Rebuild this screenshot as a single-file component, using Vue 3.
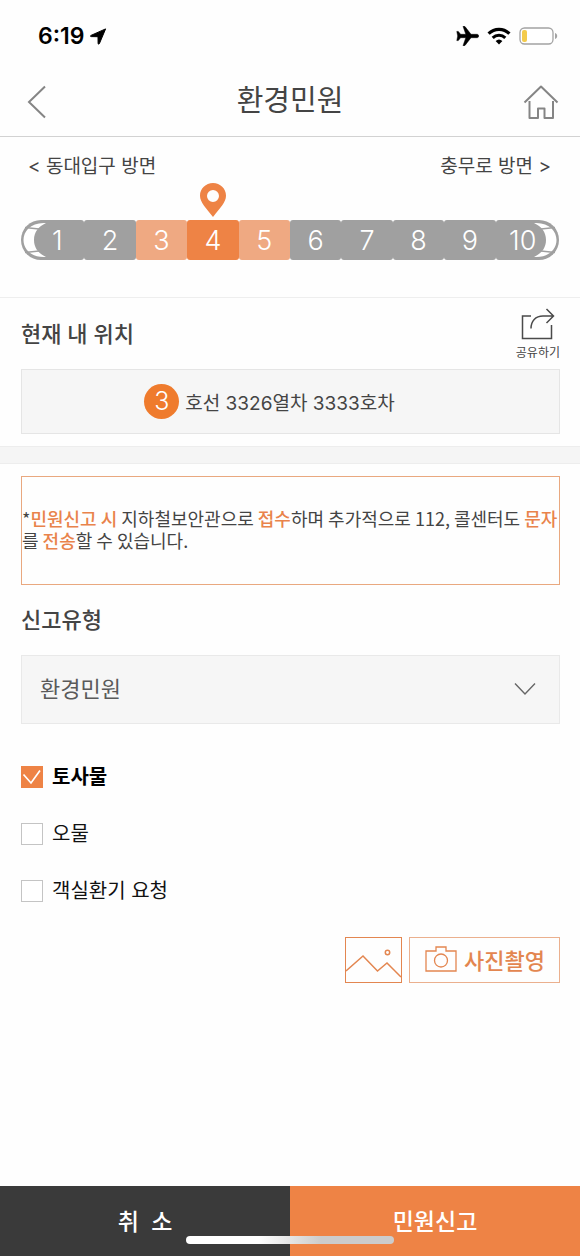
<script setup>
import { ref } from 'vue'

const cars = [1, 2, 3, 4, 5, 6, 7, 8, 9, 10]
const currentCar = ref(4)
const category = ref('환경민원')
const categories = ['환경민원', '질서저해', '응급환자']
const options = ref([
  { id: 'vomit', label: '토사물', checked: true },
  { id: 'filth', label: '오물', checked: false },
  { id: 'air', label: '객실환기 요청', checked: false },
])

const carState = (n) => ({
  current: n === currentCar.value,
  near: Math.abs(n - currentCar.value) === 1,
})
</script>

<template>
  <div class="page">
    <div class="status">
      <div class="clock">
        <span>6:19</span>
        <svg width="17" height="17" viewBox="0 0 17 17" aria-hidden="true">
          <path d="M15.600.900 1 7.400c-.8.4-.7 1.100.2 1.200l6.800.1.1 6.700c.1.900.9 1 1.300.2z" fill="#000" stroke="#000" stroke-linejoin="round" />
        </svg>
      </div>
      <div class="signals">
        <svg width="23" height="20" viewBox="0 0 23 20" aria-hidden="true">
          <path d="M21 8.300h-6L9.200.8C8.900.4 8.600.3 8.200.3H7l2.800 8H4.600L2.300 5.400H.8L1.700 10 .8 14.600h1.500l2.300-2.900h5.200l-2.800 8h1.200c.4 0 .7-.1 1-.5l5.800-7.500h6c1 0 1.700-.8 1.700-1.700S22 8.300 21 8.300z" fill="#000" stroke="#000" stroke-width=".5" />
        </svg>
        <svg width="24" height="18" viewBox="0 0 24 18" aria-hidden="true">
          <path d="M1.600 6.600a14.800 14.800 0 0 1 20.800 0" fill="none" stroke="#000" stroke-width="3.200" />
          <path d="M5.700 10.900a9 9 0 0 1 12.600 0" fill="none" stroke="#000" stroke-width="3" />
          <path d="M8.600 14.100a5 5 0 0 1 6.800 0L12 17.500z" fill="#000" />
        </svg>
        <svg width="39" height="18" viewBox="0 0 39 18" aria-hidden="true">
          <rect x="1" y="1" width="33" height="16" rx="4.500" fill="#fff" stroke="#a3a3a3" stroke-width="1.300" />
          <rect x="3" y="3" width="5" height="12" rx="2" fill="#f4cb4b" />
          <path d="M36 6c1.600.6 2.200 1.600 2.200 3s-.6 2.400-2.200 3z" fill="#a3a3a3" />
        </svg>
      </div>
    </div>

    <header class="header">
      <button class="back" type="button" aria-label="뒤로">
        <svg width="20" height="34" viewBox="0 0 20 34"><path d="M18 1.500 2 17l16 15.500" fill="none" stroke="#858585" stroke-width="2" /></svg>
      </button>
      <h1>환경민원</h1>
      <button class="home" type="button" aria-label="홈">
        <svg width="36" height="36" viewBox="0 0 36 36" fill="none" stroke="#858585" stroke-width="2" stroke-linejoin="round">
          <path d="M1.500 18.500 18 2.500l16.500 16" />
          <path d="M6.500 17v17h8.500v-9.500h6.500V34h8.500V17" />
        </svg>
      </button>
    </header>

    <section class="train-area">
      <div class="directions">
        <span>&lt; 동대입구 방면</span>
        <span>충무로 방면 &gt;</span>
      </div>
      <div class="train">
        <button
          v-for="n in cars"
          :key="n"
          type="button"
          class="car"
          :class="carState(n)"
          @click="currentCar = n"
        >
          <svg v-if="n === 1 || n === 10" class="nose" width="28" height="40" viewBox="0 0 28 40" aria-hidden="true">
            <path d="M25 3C10 2 2.500 11 2.500 20S10 38 25 37C17.500 33.500 13 28 13 20S17.500 6.500 25 3z" fill="#fff" />
            <path d="M4 7.500 18 9M4 32.500 18 31" stroke="#a0a0a0" stroke-width="1.600" />
          </svg>
          <svg v-if="n === currentCar" class="pin" width="26" height="34" viewBox="0 0 26 34" aria-hidden="true">
            <path d="M13 0C5.800 0 0 5.600 0 12.700 0 19.500 6 24.500 13 34c7-9.500 13-14.500 13-21.300C26 5.600 20.200 0 13 0zm0 7a6 6 0 1 1 0 12 6 6 0 0 1 0-12z" fill="#ee8345" />
          </svg>
          {{ n }}
        </button>
      </div>
    </section>

    <section class="location">
      <div class="location-head">
        <h2>현재 내 위치</h2>
        <button class="share" type="button">
          <svg width="36" height="34" viewBox="0 0 36 34" fill="none" stroke="#4a4a4a" stroke-width="1.500">
            <path d="M11 8H2.500v22.500h29V17" />
            <path d="M11 20.500c0-7.500 4.500-12.500 12-12.500h10.500M26.500 1l7 7-7 7" />
          </svg>
          <span>공유하기</span>
        </button>
      </div>
      <div class="location-box">
        <span class="line">3</span>
        <span>호선 3326열차 3333호차</span>
      </div>
    </section>

    <div class="band"></div>

    <main class="report">
      <p class="notice">*<b>민원신고 시</b> 지하철보안관으로 <b>접수</b>하며 추가적으로 112, 콜센터도 <b>문자</b>를 <b>전송</b>할 수 있습니다.</p>

      <label class="type-label" for="category">신고유형</label>
      <div class="select-wrap">
        <select id="category" v-model="category">
          <option v-for="c in categories" :key="c">{{ c }}</option>
        </select>
        <svg class="chevron" width="22" height="14" viewBox="0 0 22 14" aria-hidden="true">
          <path d="M1 1.500 11 12 21 1.500" fill="none" stroke="#666" stroke-width="1.400" />
        </svg>
      </div>

      <div class="options">
        <label v-for="o in options" :key="o.id" class="option" :class="{ on: o.checked }">
          <span class="tick">
            <input v-model="o.checked" type="checkbox" />
            <svg v-if="o.checked" width="22" height="22" viewBox="0 0 22 22" aria-hidden="true">
              <path d="M2.500 8.500 10 17 19 4.500" fill="none" stroke="#fff" stroke-width="1.700" />
            </svg>
          </span>
          <span>{{ o.label }}</span>
        </label>
      </div>

      <div class="photo">
        <button class="gallery" type="button" aria-label="사진 선택">
          <svg width="55" height="44" viewBox="0 0 55 44" fill="none" stroke="#e38650" stroke-width="1.500">
            <path d="M0 33 17 18l14.500 15L41 25l14 14" />
            <circle cx="41.500" cy="14.500" r="2.200" />
          </svg>
        </button>
        <button class="camera" type="button">
          <svg width="32" height="26" viewBox="0 0 32 26" fill="none" stroke="#e38650" stroke-width="1.300">
            <path d="M1 5h10V1h10v4h10v20H1z" />
            <circle cx="16" cy="14.500" r="6.500" />
          </svg>
          <span>사진촬영</span>
        </button>
      </div>
    </main>

    <footer class="actions">
      <button class="cancel" type="button">취&nbsp;&nbsp;소</button>
      <button class="submit" type="button">민원신고</button>
      <span class="home-bar"></span>
    </footer>
  </div>
</template>

<style>
body {
  background: #fefefe;
}
</style>

<style scoped>
.page {
  display: flex;
  flex-direction: column;
  min-height: 100vh;
  font-family: Inter, "Noto Sans CJK KR", sans-serif;
  color: #444;
}
.page * {
  box-sizing: border-box;
}
button,
select {
  margin: 0;
  padding: 0;
  border: 0;
  background: none;
  font-family: inherit;
  color: inherit;
  cursor: pointer;
}
svg {
  display: block;
  flex: none;
}
h1,
h2,
p {
  margin: 0;
}

.status {
  display: flex;
  justify-content: space-between;
  align-items: center;
  height: 72px;
  padding: 0 22px 0 38px;
}
.clock {
  display: flex;
  align-items: center;
  gap: 6px;
  font-size: 23px;
  font-weight: 600;
  color: #000;
}
.signals {
  display: flex;
  align-items: center;
  gap: 8px;
}

.header {
  display: grid;
  grid-template-columns: 1fr auto 1fr;
  align-items: center;
  height: 65px;
  padding: 0 21px 4px;
  border-bottom: 1px solid #d2d2d2;
}
.back {
  justify-self: start;
  padding-left: 6px;
}
.home {
  justify-self: end;
}
h1 {
  padding-bottom: 2px;
  font-size: 29px;
  line-height: 40px;
  font-weight: 400;
}

.train-area {
  padding: 17px 21px 37px;
  border-bottom: 1px solid #eee;
}
.directions {
  display: flex;
  justify-content: space-between;
  padding: 0 8px 0 7px;
  font-size: 19px;
  line-height: 26px;
}
.train {
  display: grid;
  grid-template-columns: 63fr repeat(8, 51fr) 63fr;
  margin-top: 40px;
}
.car {
  position: relative;
  height: 40px;
  padding-top: 2px;
  border-radius: 3px;
  background: #a0a0a0;
  color: #fff;
  font-size: 27px;
  font-weight: 300;
  line-height: 38px;
  text-align: center;
}
.car:first-child {
  padding-left: 9px;
  border-radius: 20px 3px 3px 20px;
}
.car:last-child {
  padding-right: 9px;
  border-radius: 3px 20px 20px 3px;
}
.car.near {
  background: #efa982;
}
.car.current {
  background: #ee8345;
}
.nose {
  position: absolute;
  top: 0;
  left: 0;
}
.car:last-child .nose {
  right: 0;
  left: auto;
  transform: scaleX(-1);
}
.pin {
  position: absolute;
  bottom: 43px;
  left: calc(50% - 13px);
}

.location {
  padding: 10px 20px 12px 21px;
}
.location-head {
  display: flex;
  justify-content: space-between;
  align-items: flex-start;
  height: 61px;
}
h2,
.type-label {
  font-size: 22px;
  line-height: 32px;
  font-weight: 500;
}
h2 {
  padding-top: 10px;
}
.share {
  display: flex;
  flex-direction: column;
  align-items: center;
  gap: 2px;
  font-size: 12px;
  line-height: 18px;
}
.location-box {
  display: flex;
  justify-content: center;
  align-items: center;
  gap: 6px;
  height: 65px;
  padding-right: 42px;
  border: 1px solid #e5e5e5;
  background: #f6f6f6;
  font-size: 19px;
}
.line {
  width: 35px;
  border-radius: 50%;
  background: #ef7b2d;
  color: #fff;
  font-size: 25px;
  font-weight: 300;
  line-height: 35px;
  text-align: center;
}

.band {
  height: 18px;
  border: solid #ededed;
  border-width: 1px 0;
  background: #f5f5f5;
}

.report {
  flex: 1;
  padding: 12px 20px 40px 21px;
}
.notice {
  height: 109px;
  padding-top: 30px;
  border: 1px solid #e9a87f;
  font-family: "Noto Sans CJK KR", sans-serif;
  font-size: 18px;
  line-height: 22px;
}
.notice b {
  font-weight: 500;
  color: #e9834b;
}
.type-label {
  display: block;
  margin: 19px 0;
}
.select-wrap {
  position: relative;
}
select {
  display: block;
  width: 100%;
  height: 69px;
  padding: 0 60px 2px 18px;
  border: 1px solid #e9e9e9;
  border-radius: 0;
  appearance: none;
  background: #f6f6f6;
  font-size: 22px;
  color: #5a5a5a;
}
.chevron {
  position: absolute;
  top: 27px;
  right: 24px;
  pointer-events: none;
}
.options {
  display: flex;
  flex-direction: column;
  gap: 29px;
  margin-top: 39px;
}
.option {
  display: flex;
  align-items: center;
  gap: 9px;
  font-size: 20px;
  line-height: 28px;
  color: #111;
}
.option.on {
  font-weight: 700;
  color: #000;
}
.tick {
  position: relative;
  width: 22px;
  height: 22px;
}
.tick input {
  display: block;
  width: 22px;
  height: 22px;
  margin: 0;
  border: 1px solid #c4c4c4;
  appearance: none;
  background: #fff;
}
.tick input:checked {
  border-color: #ee8345;
  background: #ee8345;
}
.tick svg {
  position: absolute;
  top: 0;
  left: 0;
  pointer-events: none;
}
.photo {
  display: flex;
  justify-content: flex-end;
  gap: 7px;
  margin-top: 32px;
}
.gallery,
.camera {
  height: 46px;
  border: 1px solid #e38650;
  color: #e38650;
}
.camera {
  display: flex;
  align-items: center;
  gap: 7px;
  padding: 0 14px 2px 15px;
  border-color: #ebb08e;
  font-size: 22px;
  font-weight: 500;
}

.actions {
  position: relative;
  display: flex;
  height: 70px;
}
.actions button {
  flex: 1;
  padding-bottom: 3px;
  font-size: 23px;
  font-weight: 500;
  color: #fff;
}
.cancel {
  background: #3a3a3a;
}
.actions .submit {
  background: #ee8345;
}
.home-bar {
  position: absolute;
  bottom: 12px;
  left: calc(50% - 104px);
  width: 208px;
  height: 8px;
  border-radius: 4px;
  background: linear-gradient(90deg, #fff 35%, #ccc 65%);
}
</style>
